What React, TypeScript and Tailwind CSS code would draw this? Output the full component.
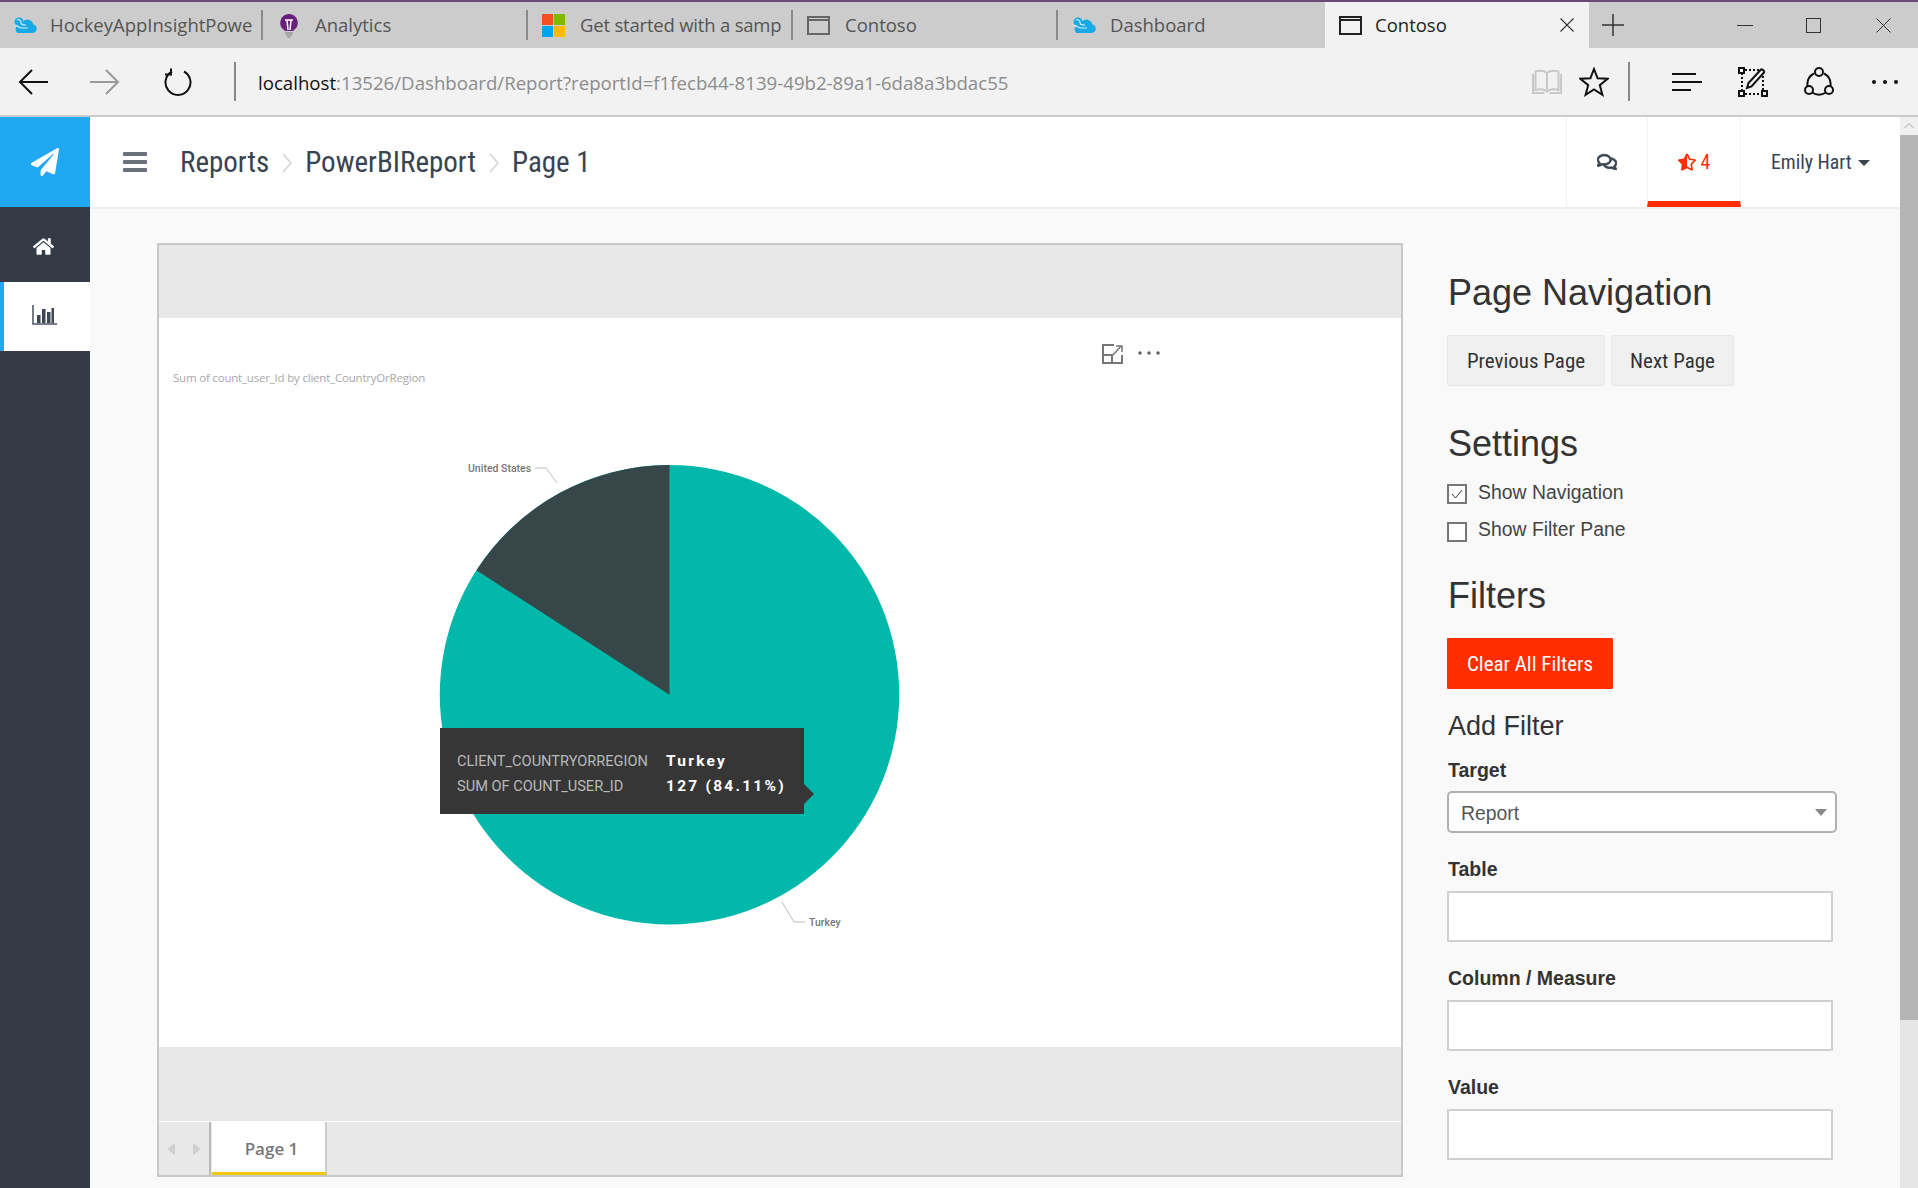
import { FaPaperPlane, FaHome, FaRegComments, FaStarHalfAlt } from "react-icons/fa";

const CloudIcon = () => (
  <svg viewBox="0 0 24 16" className="w-[24px] h-[16px] shrink-0">
    <circle cx="6" cy="5" r="4.500" fill="#19a9e5" />
    <path d="M8 16h11.500a4.300 4.300 0 0 0 .8-8.500A6 6 0 0 0 9.500 5 4.500 4.500 0 0 0 5 9a3.600 3.600 0 0 0 3 7z" fill="#19a9e5" />
    <path d="M1 8.500c3-1.500 4.500 2.500 8 2.500h6M4 3c1.500-1 4 0 4 2.500s2 2.500 5 2.500" fill="none" stroke="#cdebf8" strokeWidth="1.200" />
  </svg>
);

const BulbIcon = () => (
  <svg viewBox="0 0 20 25" className="w-[20px] h-[25px]">
    <path d="M10 1a8.800 8.800 0 0 0-4.500 16.300V18h9v-.7A8.800 8.800 0 0 0 10 1z" fill="#68217a" />
    <path d="M6 7h8M8 7l1 10M12 7l-1 10" fill="none" stroke="#fff" strokeWidth="1.500" />
    <path d="M6 20h8M7 22h6M8.500 24h3" stroke="#999" strokeWidth="1.300" />
  </svg>
);

const MsLogo = () => (
  <div className="grid grid-cols-2 gap-[1px] w-[23px] h-[23px] shrink-0">
    <div className="bg-[#f25022]" />
    <div className="bg-[#7fba00]" />
    <div className="bg-[#00a4ef]" />
    <div className="bg-[#ffb900]" />
  </div>
);

const WindowIcon = ({ dark }: { dark?: boolean }) => (
  <div className={`w-[23px] h-[19px] shrink-0 border-2 ${dark ? "border-[#222]" : "border-[#666]"}`}>
    <div className={`h-[3px] border-b-2 ${dark ? "border-[#222]" : "border-[#666]"}`} />
  </div>
);

const tabs = [
  { label: "HockeyAppInsightPowe", icon: <CloudIcon />, pl: "pl-[13px]", gap: "gap-[13px]", w: "w-[261px]", text: "" },
  { label: "Analytics", icon: <BulbIcon />, pl: "pl-[16px]", gap: "gap-[16px]", w: "w-[263px]", text: "" },
  { label: "Get started with a samp", icon: <MsLogo />, pl: "pl-[14px]", gap: "gap-[15px]", w: "w-[263px]", text: "tracking-[-0.200px]" },
  { label: "Contoso", icon: <WindowIcon />, pl: "pl-[14px]", gap: "gap-[15px]", w: "w-[263px]", text: "" },
  { label: "Dashboard", icon: <CloudIcon />, pl: "pl-[14px]", gap: "gap-[14px]", w: "w-[267px]", text: "" },
];

const TabBar = () => (
  <div className="flex h-[48px] shrink-0 bg-[#cccccc] border-t-2 border-[#6b4a78] font-['Open_Sans'] text-[18.500px] text-[#555]">
    {tabs.map((tab, index) => (
      <div key={index} className="flex items-center">
        <div className={`flex items-center h-full ${tab.w} ${tab.pl} ${tab.gap}`}>
          {tab.icon}
          <span className={`whitespace-nowrap ${tab.text}`}>{tab.label}</span>
        </div>
        {index < 4 && <div className="w-[2px] h-[30px] bg-[#8a8a8a]" />}
      </div>
    ))}
    <div className="flex items-center w-[264px] bg-[#f2f2f2] text-[#222] pl-[14px]">
      <WindowIcon dark />
      <span className="ml-[13px]">Contoso</span>
      <svg viewBox="0 0 14 14" className="w-[14px] h-[14px] ml-auto mr-[15px]">
        <path d="M0.500 0.500l13 13M13.500 0.500l-13 13" stroke="#333" strokeWidth="1.100" />
      </svg>
    </div>
    <div className="flex items-center flex-1">
      <svg viewBox="0 0 22 22" className="w-[22px] h-[22px] ml-[13px]">
        <path d="M11 0v22M0 11h22" stroke="#333" strokeWidth="1.500" />
      </svg>
      <div className="w-[16px] h-[1px] bg-[#333] ml-[113px]" />
      <div className="w-[15px] h-[15px] border border-[#333] ml-[53px]" />
      <svg viewBox="0 0 15 15" className="w-[15px] h-[15px] ml-[55px]">
        <path d="M0.500 0.500l14 14M14.500 0.500l-14 14" stroke="#333" strokeWidth="1" />
      </svg>
    </div>
  </div>
);

const ToolBar = () => (
  <div className="flex items-center h-[69px] shrink-0 bg-[#f2f2f2] border-b-2 border-[#cccccc]">
    <svg viewBox="0 0 30 26" className="w-[30px] h-[26px] ml-[18px]">
      <path d="M30 13H2M14 1L2 13l12 12" fill="none" stroke="#111" strokeWidth="2" />
    </svg>
    <svg viewBox="0 0 30 26" className="w-[30px] h-[26px] ml-[42px]">
      <path d="M0 13h28M16 1l12 12-12 12" fill="none" stroke="#9a9a9a" strokeWidth="2" />
    </svg>
    <svg viewBox="0 0 28 28" className="w-[28px] h-[28px] ml-[44px]">
      <path d="M8 3.500A12.500 12.500 0 1 0 20 3.500M7 0.500v6h-6" fill="none" stroke="#111" strokeWidth="2" />
    </svg>
    <div className="w-[2px] h-[39px] bg-[#888] ml-[42px]" />
    <div className="ml-[22px] mt-[2px] font-['Open_Sans'] text-[18.650px] text-[#8c8c8c] whitespace-nowrap">
      <span className="text-[#111]">localhost</span>:13526/Dashboard/Report?reportId=f1fecb44-8139-49b2-89a1-6da8a3bdac55
    </div>
    <div className="flex items-center ml-auto">
      <svg viewBox="0 0 30 26" className="w-[30px] h-[26px]">
        <path d="M15 4C12 1.500 7 1.500 3.500 2.500V21c4-1 8.500-1 11.500 1.500 3-2.500 7.500-2.500 11.500-1.500V2.500C23 1.500 18 1.500 15 4zM15 4v18M1 5v19h11.500M29 5v19H17.500" fill="none" stroke="#c8c8c8" strokeWidth="2" />
      </svg>
      <svg viewBox="0 0 30 30" className="w-[30px] h-[30px] ml-[17px]">
        <path d="M15 2l3.600 9.300 10 .5-7.800 6.300 2.600 9.700L15 22.400 6.600 27.800l2.600-9.700-7.800-6.300 10-.5z" fill="none" stroke="#111" strokeWidth="2" />
      </svg>
      <div className="w-[2px] h-[39px] bg-[#888] ml-[19px]" />
      <svg viewBox="0 0 30 18" className="w-[30px] h-[18px] ml-[42px]">
        <path d="M0 1h24M0 9h30M0 17h19" stroke="#111" strokeWidth="2" />
      </svg>
      <svg viewBox="0 0 30 30" className="w-[30px] h-[30px] ml-[36px]">
        <path d="M4 6v19M25 9v16M7 3h14M7 27h15" fill="none" stroke="#111" strokeWidth="2" strokeDasharray="2 2" />
        <path d="M1 1h5v5H1zM1 24h5v5H1zM24 24h5v5h-5z" fill="none" stroke="#111" strokeWidth="2" />
        <path d="M9 21l1.500-5L23 2.500c1-1 4 2 3 3L13.500 19.500z" fill="none" stroke="#111" strokeWidth="2" />
      </svg>
      <svg viewBox="0 0 30 30" className="w-[30px] h-[30px] ml-[36px]">
        <path d="M10 6.500A12.500 12.500 0 0 0 3.500 19M20 6.500A12.500 12.500 0 0 1 26.500 19M8 25.500a13 13 0 0 0 14 0" fill="none" stroke="#111" strokeWidth="2" />
        <circle cx="15" cy="5" r="4" fill="none" stroke="#111" strokeWidth="2" />
        <circle cx="5" cy="23" r="4" fill="none" stroke="#111" strokeWidth="2" />
        <circle cx="25" cy="23" r="4" fill="none" stroke="#111" strokeWidth="2" />
      </svg>
      <div className="flex gap-[7px] ml-[38px] mr-[20px]">
        <div className="w-[4px] h-[4px] rounded-full bg-[#111]" />
        <div className="w-[4px] h-[4px] rounded-full bg-[#111]" />
        <div className="w-[4px] h-[4px] rounded-full bg-[#111]" />
      </div>
    </div>
  </div>
);

const Sidebar = () => (
  <div className="w-[90px] shrink-0 flex flex-col bg-[#343b46]">
    <div className="h-[90px] bg-[#20a8f3] flex items-center justify-center">
      <FaPaperPlane className="w-[28px] h-[28px] text-white mr-[1px]" />
    </div>
    <div className="h-[75px] flex items-center justify-center text-white pt-[4px]">
      <FaHome className="w-[21px] h-[21px] mr-[4px]" />
    </div>
    <div className="h-[69px] bg-white border-l-4 border-[#20a8f3] flex items-center justify-center pb-[3px]">
      <svg viewBox="0 0 25 20" className="w-[25px] h-[20px] mr-[6px]">
        <path d="M1 0v19h24" fill="none" stroke="#4a5260" strokeWidth="1.500" />
        <path d="M5 10h3.500v8H5zM10 4h3.500v14H10zM15 7h3.500v11H15zM19.500 3H22v15h-2.500z" fill="#3f4753" />
      </svg>
    </div>
  </div>
);

const Chevron = () => (
  <svg viewBox="0 0 10 20" className="w-[10px] h-[20px] mx-[13px] mt-[2px]">
    <path d="M1 1l8 9-8 9" fill="none" stroke="#d4d4d4" strokeWidth="1.500" />
  </svg>
);

const Header = () => (
  <div className="flex h-[92px] shrink-0 bg-white border-b-2 border-[#eeeeee] text-[#3a4350] font-['Roboto_Condensed']">
    <div className="flex items-center flex-1 h-[90px]">
      <div className="flex flex-col gap-[4px] ml-[33px]">
        <div className="w-[24px] h-[4px] rounded-[1px] bg-[#6c7179]" />
        <div className="w-[24px] h-[4px] rounded-[1px] bg-[#6c7179]" />
        <div className="w-[24px] h-[4px] rounded-[1px] bg-[#6c7179]" />
      </div>
      <span className="text-[29px] ml-[33px] pt-[2px]">Reports</span>
      <Chevron />
      <span className="text-[29px] pt-[2px]">PowerBIReport</span>
      <Chevron />
      <span className="text-[29px] pt-[2px]">Page 1</span>
    </div>
    <div className="flex h-[90px] text-[19.800px]">
      <div className="w-[81px] flex items-center justify-center border-l border-[#f3f3f3]">
        <FaRegComments className="w-[20px] h-[20px] stroke-[24px]" />
      </div>
      <div className="w-[94px] flex items-center justify-center gap-[5px] border-x border-[#f3f3f3] border-b-[6px] border-b-[#ff2d00] text-[#ff2d00] pt-[6px]">
        <FaStarHalfAlt className="w-[18px] h-[18px]" />
        <span className="pt-[1px]">4</span>
      </div>
      <div className="w-[159px] flex items-center pl-[30px]">
        <span className="pt-[2px]">Emily Hart</span>
        <svg viewBox="0 0 12 6" className="w-[12px] h-[6px] ml-[6px] mt-[1px]">
          <path d="M0 0h12L6 6z" fill="#3a4350" />
        </svg>
      </div>
    </div>
  </div>
);

const Chart = () => (
  <div className="relative bg-white h-[729px]">
    <svg viewBox="159 318 1242 729" className="w-full h-full block">
      <path d="M1114 345h-11v18h19v-8M1103 355h9v8" stroke="#777" fill="none" strokeWidth="2" />
      <path d="M1113 355l8-9M1116 346h6v6" stroke="#777" fill="none" strokeWidth="1.500" />
      <circle cx="1140" cy="353" r="1.800" fill="#666" />
      <circle cx="1149" cy="353" r="1.800" fill="#666" />
      <circle cx="1158" cy="353" r="1.800" fill="#666" />
      <text x="173" y="382" fontSize="11.500" fill="#a8a8a8" fontFamily="Open Sans" letterSpacing="-0.200">Sum of count_user_Id by client_CountryOrRegion</text>
      <circle cx="669.500" cy="694.700" r="229.700" fill="#01b8aa" />
      <path d="M669.500 694.700V465A229.700 229.700 0 0 0 476.500 570.300z" fill="#374649" />
      <path d="M535 468h11l11 15M782 902l12 20h11" fill="none" stroke="#bdbdbd" strokeWidth="1" />
      <text x="468" y="472" fontSize="10.500" fontWeight="500" fill="#777" fontFamily="Roboto">United States</text>
      <text x="809" y="926" fontSize="10.500" fontWeight="500" fill="#777" fontFamily="Roboto">Turkey</text>
    </svg>
    <div className="absolute left-[281px] top-[410px] w-[364px] h-[86px] bg-[#363636] pl-[17px] pt-[21px] font-['Roboto'] text-[14.600px] leading-[25px]">
      <div className="flex">
        <span className="w-[209px] text-[#b9b9b9]">CLIENT_COUNTRYORREGION</span>
        <span className="text-white font-bold text-[15.500px] tracking-[2.250px]">Turkey</span>
      </div>
      <div className="flex">
        <span className="w-[209px] text-[#b9b9b9]">SUM OF COUNT_USER_ID</span>
        <span className="text-white font-bold text-[15.500px] tracking-[2.250px]">127 (84.11%)</span>
      </div>
      <svg viewBox="0 0 10 20" className="absolute left-full top-[56px] w-[10px] h-[20px]">
        <path d="M0 0l10 10L0 20z" fill="#363636" />
      </svg>
    </div>
  </div>
);

const Report = () => (
  <div className="w-[1246px] h-[934px] shrink-0 flex flex-col border-2 border-[#c8c8c8] bg-[#e8e8e8]">
    <div className="h-[73px] shrink-0" />
    <Chart />
    <div className="h-[74px] shrink-0 border-b border-white box-content" />
    <div className="flex flex-1">
      <div className="w-[52px] flex items-center justify-center gap-[18px] border-r-2 border-[#bbbbbb]">
        <svg viewBox="0 0 8 12" className="w-[8px] h-[12px]"><path d="M8 0v12L0 6z" fill="#cfcfcf" /></svg>
        <svg viewBox="0 0 8 12" className="w-[8px] h-[12px]"><path d="M0 0v12l8-6z" fill="#cfcfcf" /></svg>
      </div>
      <div className="w-[115px] ml-[1px] bg-white border-r-2 border-[#cccccc] border-b-[3px] border-b-[#f2c80f] flex items-center justify-center font-['Open_Sans'] font-semibold text-[17px] text-[#777] pt-[4px] pl-[6px]">
        Page 1
      </div>
    </div>
  </div>
);

const FieldLabel = ({ text, top }: { text: string; top: string }) => (
  <div className={`h-[22px] leading-[22px] font-bold text-[19.500px] ml-[1px] ${top}`}>{text}</div>
);

const TextField = ({ top }: { top: string }) => (
  <input className={`block w-[386px] h-[51px] shrink-0 bg-white border-2 border-[#cfcfcf] rounded-[1px] ${top}`} />
);

const SidePanel = () => (
  <div className="ml-[44px] w-[400px] shrink-0 flex flex-col items-start font-['Liberation_Sans'] text-[#333]">
    <h2 className="text-[36px] leading-[40px] mt-[30px] ml-[1px]">Page Navigation</h2>
    <div className="flex gap-[6px] mt-[22px] font-['Roboto_Condensed'] text-[21px]">
      <div className="w-[158px] h-[51px] flex items-center justify-center bg-[#f0f0f0] border border-[#e8e8e8] rounded-[2px] pt-[2px]">Previous Page</div>
      <div className="w-[123px] h-[51px] flex items-center justify-center bg-[#f0f0f0] border border-[#e8e8e8] rounded-[2px] pt-[2px]">Next Page</div>
    </div>
    <h2 className="text-[36px] leading-[40px] mt-[38px] ml-[1px]">Settings</h2>
    <div className="flex h-[22px] leading-[22px] text-[19.400px] text-[#444] mt-[17px]">
      <div className="w-[20px] h-[20px] mt-[3px] bg-white border-2 border-[#777]">
        <svg viewBox="0 0 16 16" className="w-[16px] h-[16px]"><path d="M3 8l3.500 4L13 4" fill="none" stroke="#333" strokeWidth="1" /></svg>
      </div>
      <span className="ml-[11px]">Show Navigation</span>
    </div>
    <div className="flex h-[22px] leading-[22px] text-[19.400px] text-[#444] mt-[15px]">
      <div className="w-[20px] h-[20px] mt-[4px] bg-white border-2 border-[#777]" />
      <span className="ml-[11px]">Show Filter Pane</span>
    </div>
    <h2 className="text-[36px] leading-[40px] mt-[36px] ml-[1px]">Filters</h2>
    <div className="w-[166px] h-[51px] mt-[22px] pt-[2px] flex items-center justify-center bg-[#ff2d00] text-white rounded-[1px] font-['Roboto_Condensed'] text-[21px]">Clear All Filters</div>
    <h3 className="text-[27px] leading-[30px] mt-[22px] ml-[1px]">Add Filter</h3>
    <FieldLabel text="Target" top="mt-[18px]" />
    <div className="w-[390px] h-[42px] mt-[10px] flex items-center justify-between bg-white border-2 border-[#b0b0b0] rounded-[5px] pl-[12px] pr-[8px] text-[19.400px] text-[#555]">
      <span className="pt-[3px]">Report</span>
      <svg viewBox="0 0 12 7" className="w-[12px] h-[7px]"><path d="M0 0h12L6 7z" fill="#888" /></svg>
    </div>
    <FieldLabel text="Table" top="mt-[25px]" />
    <TextField top="mt-[11px]" />
    <FieldLabel text="Column / Measure" top="mt-[25px]" />
    <TextField top="mt-[11px]" />
    <FieldLabel text="Value" top="mt-[25px]" />
    <TextField top="mt-[11px]" />
  </div>
);

const Scrollbar = () => (
  <div className="w-[18px] shrink-0 flex flex-col bg-[#e6e6e6]">
    <div className="h-[18px] bg-[#f0f0f0] flex items-center justify-center">
      <svg viewBox="0 0 10 6" className="w-[10px] h-[6px]"><path d="M0 5.500l5-5 5 5" fill="none" stroke="#aaa" strokeWidth="1" /></svg>
    </div>
    <div className="h-[885px] bg-[#b5b5b5]" />
  </div>
);

export default function App() {
  return (
    <div className="flex flex-col w-[1918px] h-[1188px] overflow-hidden bg-[#f9f9f9]">
      <TabBar />
      <ToolBar />
      <div className="flex flex-1 min-h-0">
        <Sidebar />
        <div className="flex flex-col flex-1 min-w-0">
          <Header />
          <div className="flex flex-1 min-h-0 pt-[34px] pl-[67px]">
            <Report />
            <SidePanel />
          </div>
        </div>
        <Scrollbar />
      </div>
    </div>
  );
}
